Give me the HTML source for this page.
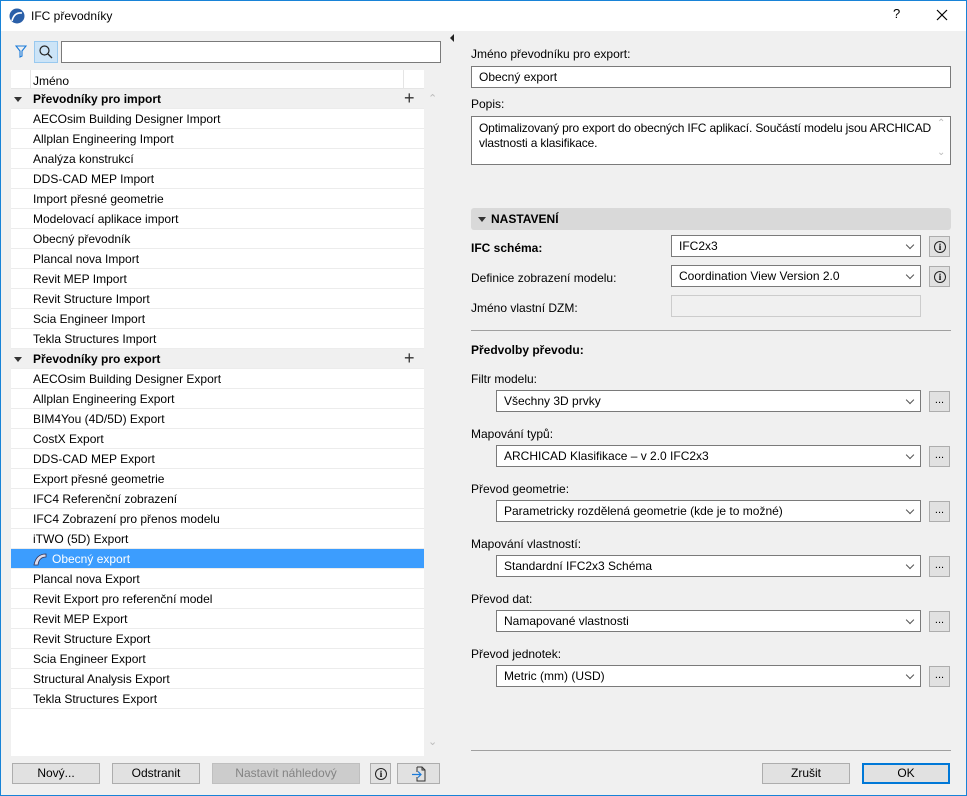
<!DOCTYPE html>
<html><head><meta charset="utf-8"><style>
*{box-sizing:border-box;margin:0;padding:0}
body{width:967px;height:796px;position:relative;overflow:hidden;background:#f0f0f0;font-family:"Liberation Sans",sans-serif;font-size:12px;color:#000}
.a{position:absolute}
.win{left:0;top:0;width:967px;height:796px;border:1px solid #1883d7;}
.title{left:1px;top:1px;width:965px;height:30px;background:#fff}
.row{position:absolute;left:11px;width:413px;height:20px;line-height:20px;padding-left:22px;border-bottom:1px solid #ececec;background:#fff;white-space:nowrap}
.grp{background:#f0f0f0;font-weight:bold;padding-left:22px}
.grp .tri{position:absolute;left:3px;top:8px;border-left:4px solid transparent;border-right:4px solid transparent;border-top:5px solid #333}
.plus{position:absolute;left:393px;top:0;font-weight:normal;font-size:18px;line-height:19px;color:#333}
.sel{background:#3c9dfe;color:#fff}
.in{position:absolute;background:#fff;border:1px solid #7a7a7a;height:22px;line-height:21px;padding-left:7px;white-space:nowrap}
.dd::after{content:"";position:absolute;right:7px;top:6px;width:5px;height:5px;border-right:1px solid #555;border-bottom:1px solid #555;transform:rotate(45deg)}
.btn{position:absolute;background:#e1e1e1;border:1px solid #adadad;height:21px;line-height:19px;text-align:center}
.lb{position:absolute;left:471px;white-space:nowrap}
.sm{position:absolute;width:21px;height:21px;background:#e1e1e1;border:1px solid #adadad;text-align:center;line-height:16px;font-size:11px}
.info{position:absolute;left:4px;top:4px;width:12px;height:12px;border:1.3px solid #222;border-radius:50%;font-size:9px;line-height:10px;font-weight:bold;font-family:"Liberation Serif",serif}
</style></head><body>
<div class="a win"></div>
<div class="a title"></div>
<svg class="a" style="left:9px;top:8px" width="16" height="16" viewBox="0 0 16 16"><circle cx="8" cy="8" r="7.5" fill="#2a5fa8"/><path d="M3 13 Q5 4 13 5" stroke="#fff" stroke-width="1.6" fill="none"/></svg>
<div class="a" style="left:31px;top:9px;font-size:12px">IFC převodníky</div>
<div class="a" style="left:893px;top:6px;font-size:13px">?</div>
<svg class="a" style="left:936px;top:9px" width="12" height="12"><path d="M1 1L11 11M11 1L1 11" stroke="#000" stroke-width="1.2"/></svg>

<svg class="a" style="left:15px;top:45px" width="12" height="13"><path d="M1 1H11L7 6V11L5 12V6Z" stroke="#1a7ad9" fill="none" stroke-width="1.1"/></svg>
<div class="a" style="left:34px;top:41px;width:24px;height:22px;background:#cce4f7;border:1px solid #99c9ef"></div>
<svg class="a" style="left:38px;top:44px" width="16" height="16"><circle cx="6.5" cy="6.5" r="4.5" stroke="#222" fill="none" stroke-width="1.2"/><path d="M10 10L14 14" stroke="#222" stroke-width="1.3"/></svg>
<div class="a" style="left:61px;top:41px;width:380px;height:22px;background:#fff;border:1px solid #7a7a7a"></div>

<div class="a" style="left:11px;top:70px;width:413px;height:686px;background:#fff"></div>
<div class="a" style="left:11px;top:70px;width:413px;height:19px;background:#fff;border-bottom:1px solid #e5e5e5"></div>
<div class="a" style="left:30px;top:70px;width:1px;height:19px;background:#e5e5e5"></div>
<div class="a" style="left:403px;top:70px;width:1px;height:19px;background:#e5e5e5"></div>
<div class="a" style="left:33px;top:74px">Jméno</div>
<div class="a" style="left:428px;top:92px;color:#bbb;font-size:11px">&#8963;</div>
<div class="a" style="left:428px;top:735px;color:#bbb;font-size:11px">&#8964;</div>

<div class="row grp" style="top:89px"><span class="tri"></span>Převodníky pro import<span class="plus">+</span></div>
<div class="row" style="top:109px">AECOsim Building Designer Import</div>
<div class="row" style="top:129px">Allplan Engineering Import</div>
<div class="row" style="top:149px">Analýza konstrukcí</div>
<div class="row" style="top:169px">DDS-CAD MEP Import</div>
<div class="row" style="top:189px">Import přesné geometrie</div>
<div class="row" style="top:209px">Modelovací aplikace import</div>
<div class="row" style="top:229px">Obecný převodník</div>
<div class="row" style="top:249px">Plancal nova Import</div>
<div class="row" style="top:269px">Revit MEP Import</div>
<div class="row" style="top:289px">Revit Structure Import</div>
<div class="row" style="top:309px">Scia Engineer Import</div>
<div class="row" style="top:329px">Tekla Structures Import</div>
<div class="row grp" style="top:349px"><span class="tri"></span>Převodníky pro export<span class="plus">+</span></div>
<div class="row" style="top:369px">AECOsim Building Designer Export</div>
<div class="row" style="top:389px">Allplan Engineering Export</div>
<div class="row" style="top:409px">BIM4You (4D/5D) Export</div>
<div class="row" style="top:429px">CostX Export</div>
<div class="row" style="top:449px">DDS-CAD MEP Export</div>
<div class="row" style="top:469px">Export přesné geometrie</div>
<div class="row" style="top:489px">IFC4 Referenční zobrazení</div>
<div class="row" style="top:509px">IFC4 Zobrazení pro přenos modelu</div>
<div class="row" style="top:529px">iTWO (5D) Export</div>
<div class="row sel" style="top:549px;padding-left:41px"><svg style="position:absolute;left:22px;top:3px" width="15" height="14"><path d="M1 13 Q3 2 13 2 L13 5 Q6 5 5 13Z" fill="#dde" stroke="#335" stroke-width=".8"/></svg>Obecný export</div>
<div class="row" style="top:569px">Plancal nova Export</div>
<div class="row" style="top:589px">Revit Export pro referenční model</div>
<div class="row" style="top:609px">Revit MEP Export</div>
<div class="row" style="top:629px">Revit Structure Export</div>
<div class="row" style="top:649px">Scia Engineer Export</div>
<div class="row" style="top:669px">Structural Analysis Export</div>
<div class="row" style="top:689px">Tekla Structures Export</div>

<div class="btn" style="left:12px;top:763px;width:88px">Nový...</div>
<div class="btn" style="left:112px;top:763px;width:88px">Odstranit</div>
<div class="btn" style="left:212px;top:763px;width:148px;background:#cccccc;border-color:#bfbfbf;color:#838383">Nastavit náhledový</div>
<div class="sm" style="left:370px;top:763px;width:21px"><span class="info">i</span></div>
<div class="btn" style="left:397px;top:763px;width:43px"><svg style="margin-top:2px" width="16" height="16"><path d="M6 1H11L14 4V15H6V11M6 6V1" stroke="#333" fill="none"/><path d="M11 1V4H14" stroke="#333" fill="none"/><path d="M1 8.5H10M7 5.5L10 8.5L7 11.5" stroke="#1a7ad9" fill="none" stroke-width="1.2"/></svg></div>

<div class="a" style="left:450px;top:34px;border-top:4px solid transparent;border-bottom:4px solid transparent;border-right:4px solid #222"></div>

<div class="lb" style="top:47px">Jméno převodníku pro export:</div>
<div class="in" style="left:471px;top:66px;width:480px">Obecný export</div>
<div class="lb" style="top:97px">Popis:</div>
<div class="in" style="left:471px;top:116px;width:480px;height:49px;line-height:15px;padding-top:4px;padding-left:7px;letter-spacing:-0.15px">Optimalizovaný pro export do obecných IFC aplikací. Součástí modelu jsou ARCHICAD<br>vlastnosti a klasifikace.</div>
<div class="a" style="left:937px;top:118px;color:#bbb;font-size:10px">&#8963;</div>
<div class="a" style="left:937px;top:147px;color:#bbb;font-size:10px">&#8964;</div>

<div class="a" style="left:471px;top:208px;width:480px;height:22px;background:#d9d9d9;border-radius:3px"></div>
<div class="a" style="left:478px;top:217px;border-left:4px solid transparent;border-right:4px solid transparent;border-top:5px solid #333"></div>
<div class="a" style="left:491px;top:212px;font-weight:bold">NASTAVENÍ</div>

<div class="lb" style="top:241px;font-weight:bold">IFC schéma:</div>
<div class="in dd" style="left:671px;top:235px;width:250px">IFC2x3</div>
<div class="sm" style="left:929px;top:236px"><span class="info">i</span></div>
<div class="lb" style="top:271px">Definice zobrazení modelu:</div>
<div class="in dd" style="left:671px;top:265px;width:250px">Coordination View Version 2.0</div>
<div class="sm" style="left:929px;top:266px"><span class="info">i</span></div>
<div class="lb" style="top:301px">Jméno vlastní DZM:</div>
<div class="in" style="left:671px;top:295px;width:250px;background:#f0f0f0;border-color:#ccc"></div>
<div class="a" style="left:471px;top:330px;width:480px;height:1px;background:#a0a0a0"></div>
<div class="lb" style="top:343px;font-weight:bold">Předvolby převodu:</div>

<div class="lb" style="top:372px">Filtr modelu:</div>
<div class="in dd" style="left:496px;top:390px;width:425px">Všechny 3D prvky</div>
<div class="sm" style="left:929px;top:391px">...</div>
<div class="lb" style="top:427px">Mapování typů:</div>
<div class="in dd" style="left:496px;top:445px;width:425px">ARCHICAD Klasifikace – v 2.0 IFC2x3</div>
<div class="sm" style="left:929px;top:446px">...</div>
<div class="lb" style="top:482px">Převod geometrie:</div>
<div class="in dd" style="left:496px;top:500px;width:425px">Parametricky rozdělená geometrie (kde je to možné)</div>
<div class="sm" style="left:929px;top:501px">...</div>
<div class="lb" style="top:537px">Mapování vlastností:</div>
<div class="in dd" style="left:496px;top:555px;width:425px">Standardní IFC2x3 Schéma</div>
<div class="sm" style="left:929px;top:556px">...</div>
<div class="lb" style="top:592px">Převod dat:</div>
<div class="in dd" style="left:496px;top:610px;width:425px">Namapované vlastnosti</div>
<div class="sm" style="left:929px;top:611px">...</div>
<div class="lb" style="top:647px">Převod jednotek:</div>
<div class="in dd" style="left:496px;top:665px;width:425px">Metric (mm) (USD)</div>
<div class="sm" style="left:929px;top:666px">...</div>

<div class="a" style="left:471px;top:750px;width:480px;height:1px;background:#a0a0a0"></div>
<div class="btn" style="left:762px;top:763px;width:88px">Zrušit</div>
<div class="btn" style="left:862px;top:763px;width:88px;border:2px solid #0078d7;line-height:17px">OK</div>
</body></html>
